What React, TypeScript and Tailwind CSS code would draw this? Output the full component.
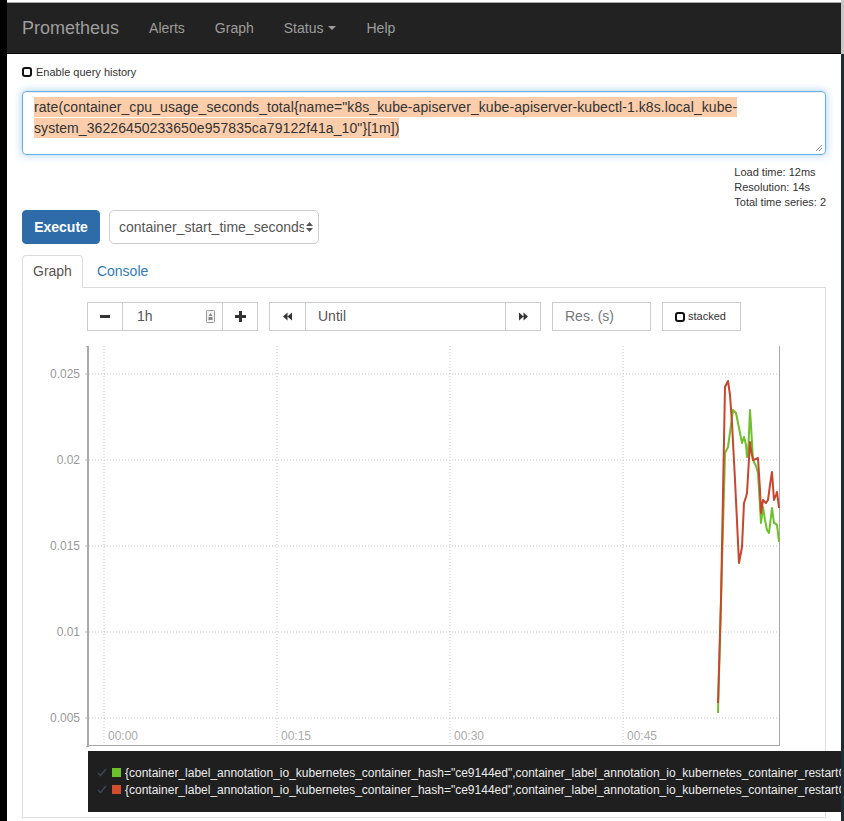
import React from 'react';

const green: [number, number][] = [
  [718, 713], [725, 453], [728, 447], [731, 425], [733, 410], [736, 413], [739, 428], [742, 443],
  [744, 437], [746, 445], [747, 457], [748, 456], [750, 410], [751, 425], [753, 460], [756, 466],
  [758, 473], [761, 523], [763, 507], [765, 520], [767, 530], [769, 533], [772, 508], [774, 523],
  [776, 524], [777, 525], [779, 542],
];

const red: [number, number][] = [
  [718, 703], [721, 600], [725, 387], [728, 381], [730, 395], [732, 423], [735, 480], [739, 563],
  [742, 547], [744, 503], [746, 497], [747, 493], [750, 442], [751, 450], [753, 460], [756, 459],
  [758, 458], [760, 490], [761, 513], [763, 500], [766, 503], [768, 500], [770, 485], [772, 472],
  [774, 500], [776, 495], [777, 492], [779, 508],
];

const yTicks = [
  { y: 374, label: '0.025' },
  { y: 460, label: '0.02' },
  { y: 546, label: '0.015' },
  { y: 632, label: '0.01' },
  { y: 718, label: '0.005' },
];

const xTicks = [
  { x: 104, label: '00:00' },
  { x: 277, label: '00:15' },
  { x: 450, label: '00:30' },
  { x: 623, label: '00:45' },
];

const legendText =
  '{container_label_annotation_io_kubernetes_container_hash="ce9144ed",container_label_annotation_io_kubernetes_container_restartCount="0"}';

function Checkbox() {
  return <span className="inline-block shrink-0 w-[10px] h-[10px] border-2 border-[#111] rounded-[3px] bg-white" />;
}

function Chart() {
  const pts = (p: [number, number][]) => p.map(([x, y]) => `${x},${y}`).join(' ');
  return (
    <svg width={802} height={420} viewBox="23 331 802 420" className="block">
      {yTicks.map((t) => (
        <g key={t.label}>
          <line x1={89} x2={779} y1={t.y} y2={t.y} stroke="#c8c8c8" strokeDasharray="1 2" />
          <line x1={85} x2={88} y1={t.y} y2={t.y} stroke="#bbb" />
          <text x={80} y={t.y + 4} textAnchor="end" fontSize={12} fill="#999" fontFamily="Liberation Sans, Arial, sans-serif">
            {t.label}
          </text>
        </g>
      ))}
      {xTicks.map((t) => (
        <g key={t.label}>
          <line x1={t.x} x2={t.x} y1={346} y2={745} stroke="#c8c8c8" strokeDasharray="1 2" />
          <text x={t.x + 4} y={740} fontSize={12} fill="#aaa" fontFamily="Liberation Sans, Arial, sans-serif">
            {t.label}
          </text>
        </g>
      ))}
      <line x1={88} x2={88} y1={346} y2={747} stroke="#aaa" strokeWidth={2} />
      <line x1={86} x2={89} y1={346.5} y2={346.5} stroke="#aaa" />
      <line x1={86} x2={89} y1={746.5} y2={746.5} stroke="#aaa" />
      <line x1={89} x2={780} y1={745.5} y2={745.5} stroke="#a5a5a5" />
      <line x1={779.5} x2={779.5} y1={346} y2={745} stroke="#a5a5a5" />
      <polyline points={pts(green)} fill="none" stroke="#6fbf2c" strokeWidth={2} strokeLinejoin="round" />
      <polyline points={pts(red)} fill="none" stroke="#c8462c" strokeWidth={2} strokeLinejoin="round" />
    </svg>
  );
}

function Box({ className, children }: { className: string; children?: React.ReactNode }) {
  return <div className={`h-[29px] border border-[#ccc] bg-white flex items-center ${className}`}>{children}</div>;
}

export default function App() {
  return (
    <div className="flex w-[844px] h-[821px] overflow-hidden bg-white font-['Liberation_Sans',Arial,sans-serif]">
      <div className="w-[7px] shrink-0 bg-black" />

      <div className="w-[834px] shrink-0 flex flex-col">
        <div className="h-[2px] bg-white" />
        <div className="h-[1px] bg-[#a9a9a9]" />
        <nav className="h-[51px] bg-[#222] border-b border-[#080808] flex items-center text-[#9d9d9d]">
          <span className="pl-[15px] pr-[15px] text-[18px]">Prometheus</span>
          <span className="px-[15px] text-[14px]">Alerts</span>
          <span className="px-[15px] text-[14px]">Graph</span>
          <span className="px-[15px] text-[14px] flex items-center">
            Status
            <span className="ml-[5px] w-0 h-0 border-x-[4px] border-x-transparent border-t-[4px] border-t-[#9d9d9d]" />
          </span>
          <span className="px-[15px] text-[14px]">Help</span>
        </nav>

        <div className="px-[15px] flex flex-col">
          <div className="mt-[10px] h-[16px] flex items-center gap-[4px] text-[11px] text-[#333]">
            <Checkbox />
            <span>Enable query history</span>
          </div>

          <div className="mt-[11px] w-[804px] h-[64px] border border-[#66afe9] rounded-[4px] shadow-[inset_0_1px_1px_rgba(0,0,0,0.075),0_0_8px_rgba(102,175,233,0.6)] px-[11px] py-[5px] text-[14px] leading-[21px] text-[#333] relative whitespace-nowrap tracking-[0.08px]">
            <span className="bg-[#fbcdaa] py-[2px]">
              rate(container_cpu_usage_seconds_total{'{'}name="k8s_kube-apiserver_kube-apiserver-kubectl-1.k8s.local_kube-
            </span>
            <br />
            <span className="bg-[#fbcdaa] py-[2px]">system_36226450233650e957835ca79122f41a_10"{'}'}[1m])</span>
            <svg className="absolute right-[2px] bottom-[2px]" width={8} height={8} viewBox="0 0 8 8">
              <line x1={7} y1={1} x2={1} y2={7} stroke="#888" />
              <line x1={7} y1={4} x2={4} y2={7} stroke="#888" />
            </svg>
          </div>

          <div className="mt-[10px] flex justify-end">
            <div className="text-[11px] leading-[15px] text-[#333]">
              <div>Load time: 12ms</div>
              <div>Resolution: 14s</div>
              <div>Total time series: 2</div>
            </div>
          </div>

          <div className="flex items-center">
            <div className="w-[78px] h-[34px] bg-[#2d6ca8] border border-[#2e6da4] rounded-[4px] text-white text-[14px] font-semibold flex items-center justify-center">
              Execute
            </div>
            <div className="ml-[9px] w-[210px] h-[34px] border border-[#ccc] rounded-[5px] bg-white pl-[9px] pr-[4px] flex items-center text-[14px] text-[#555]">
              <span className="w-[185px] overflow-hidden whitespace-nowrap">container_start_time_seconds</span>
              <svg width={9} height={12} viewBox="0 0 9 12" className="ml-[1px]">
                <path d="M4.5 1 L8 5 L1 5 Z M4.5 11 L8 7 L1 7 Z" fill="#555" />
              </svg>
            </div>
          </div>

          <div className="mt-[11px] h-[33px] flex border-b border-[#ddd]">
            <div className="h-[33px] -mb-px px-[10px] border border-[#ddd] border-b-white rounded-t-[4px] bg-white flex items-center text-[14px] text-[#555]">
              Graph
            </div>
            <div className="ml-[4px] px-[10px] flex items-center text-[14px] text-[#337ab7]">Console</div>
          </div>

          <div className="border-x border-b border-[#ddd] pt-[14px] pb-[5px]">
            <div className="ml-[64px] flex items-center text-[14px] text-[#555]">
              <Box className="w-[36px] justify-center">
                <span className="w-[10px] h-[3px] bg-[#333]" />
              </Box>
              <Box className="w-[99px] border-x-0 pl-[14px] pr-[7px] justify-between">
                <span>1h</span>
                <svg width={9} height={13} viewBox="0 0 9 13">
                  <rect x={0.5} y={0.5} width={8} height={12} rx={1} fill="#f3f3f3" stroke="#999" />
                  <path d="M4.5 3 L6.5 6 L2.5 6 Z" fill="#888" />
                  <rect x={2.5} y={7} width={4} height={3} fill="#888" />
                </svg>
              </Box>
              <Box className="w-[36px] justify-center">
                <svg width={11} height={11} viewBox="0 0 11 11">
                  <path d="M4 0h3v4h4v3H7v4H4V7H0V4h4z" fill="#333" />
                </svg>
              </Box>

              <Box className="ml-[11px] w-[37px] justify-center">
                <svg width={9} height={9} viewBox="0 0 9 9">
                  <path d="M0 4.5 L4.5 0.5 V8.5 Z M4.5 4.5 L9 0.5 V8.5 Z" fill="#333" />
                </svg>
              </Box>
              <Box className="w-[199px] border-x-0 pl-[12px]">Until</Box>
              <Box className="w-[36px] justify-center">
                <svg width={9} height={9} viewBox="0 0 9 9">
                  <path d="M9 4.5 L4.5 0.5 V8.5 Z M4.5 4.5 L0 0.5 V8.5 Z" fill="#333" />
                </svg>
              </Box>

              <Box className="ml-[11px] w-[99px] pl-[12px] text-[#777]">Res. (s)</Box>
              <Box className="ml-[11px] w-[79px] pl-[12px] gap-[3px] text-[11px] text-[#333]">
                <Checkbox />
                <span>stacked</span>
              </Box>
            </div>

            <Chart />

            <div className="relative z-10 ml-[65px] w-[753px] h-[61px] bg-[#1f1f1f] pt-[13px] pl-[9px] overflow-hidden">
              {['#6cc02c', '#d04d2f'].map((c) => (
                <div key={c} className="h-[17px] flex items-center whitespace-nowrap text-[12px] text-[#ececec]">
                  <svg width={10} height={9} viewBox="0 0 10 9" className="shrink-0">
                    <path d="M1 5 L3.5 7.5 L9 1" fill="none" stroke="#34465a" strokeWidth={1.6} />
                  </svg>
                  <span className="ml-[5px] w-[9px] h-[9px] shrink-0" style={{ backgroundColor: c }} />
                  <span className="ml-[4px]">{legendText}</span>
                </div>
              ))}
            </div>
          </div>
        </div>
      </div>

      <div className="w-[3px] shrink-0 flex flex-col">
        <div className="h-[54px] bg-[#c6c6c6]" />
        <div className="flex-1 bg-[#1c2d35]" />
      </div>
    </div>
  );
}
